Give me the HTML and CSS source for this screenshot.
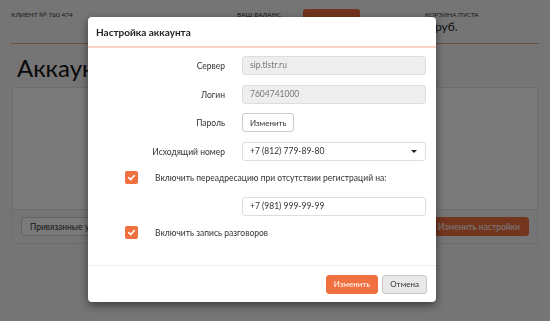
FILE: index.html
```html
<!DOCTYPE html>
<html lang="ru">
<head>
  <meta charset="UTF-8" />
  <title>Аккаунт</title>
  <link rel="stylesheet" href="styles.css">
</head>
<body>

  <div class="topbar">
    <div class="client">КЛИЕНТ № 760 474</div>
    <div class="balance">
      <span class="caption">ВАШ БАЛАНС</span>
      <span class="balance-box"></span>
    </div>
    <div class="cart">
      <span class="caption">КОРЗИНА ПУСТА</span>
      <span class="cart-sum">0 руб.</span>
    </div>
  </div>

  <h1 class="page-title">Аккаунт</h1>

  <div class="panel">
    <div class="panel-body"></div>
    <div class="panel-footer">
      <button class="btn">Привязанные устройства</button>
      <button class="btn btn-orange">Изменить настройки</button>
    </div>
  </div>

  <div class="overlay"></div>

  <div class="modal">
    <div class="modal-header">Настройка аккаунта</div>

    <div class="modal-body">
      <div class="row">
        <label class="label">Сервер</label>
        <div class="field disabled">sip.tlstr.ru</div>
      </div>
      <div class="row">
        <label class="label">Логин</label>
        <div class="field disabled">7604741000</div>
      </div>
      <div class="row">
        <label class="label">Пароль</label>
        <div class="cell"><button class="btn btn-small">Изменить</button></div>
      </div>
      <div class="row">
        <label class="label">Исходящий номер</label>
        <div class="field select">+7 (812) 779-89-80 <span class="caret"></span></div>
      </div>
      <div class="check-row">
        <span class="checkbox">
          <svg width="9" height="9" viewBox="0 0 10 10"><path d="M2 5.2 L4.2 7.3 L8.2 2.8" fill="none" stroke="#fff" stroke-width="1.8" stroke-linecap="round" stroke-linejoin="round"/></svg>
        </span>
        <span class="check-label">Включить переадресацию при отсутствии регистраций на:</span>
      </div>
      <div class="row">
        <span class="label"></span>
        <div class="field">+7 (981) 999-99-99</div>
      </div>
      <div class="check-row">
        <span class="checkbox">
          <svg width="9" height="9" viewBox="0 0 10 10"><path d="M2 5.2 L4.2 7.3 L8.2 2.8" fill="none" stroke="#fff" stroke-width="1.8" stroke-linecap="round" stroke-linejoin="round"/></svg>
        </span>
        <span class="check-label">Включить запись разговоров</span>
      </div>
    </div>

    <div class="modal-footer">
      <button class="btn btn-orange">Изменить</button>
      <button class="btn btn-gray">Отмена</button>
    </div>
  </div>

</body>
</html>
```

FILE: styles.css
```css
body {
  font-family: Lato, 'Open Sans', sans-serif;
  background: #f5f5f5;
  margin: 0;
  color: #222;
}

.topbar {
  display: flex;
  align-items: flex-start;
  margin: 0 11px;
  padding-top: 9px;
  height: 34px;
  border-bottom: 1px solid #f0a482;
}

.caption,
.client {
  font-size: 6.5px;
  text-transform: uppercase;
  color: #333;
  padding-top: 2px;
}

.client {
  width: 226px;
}

.balance {
  display: flex;
  width: 188px;
}

.balance .caption {
  width: 66px;
}

.balance-box {
  width: 57px;
  height: 22px;
  border-radius: 3px;
  background: #f07040;
}

.cart {
  display: flex;
  flex-direction: column;
}

.cart-sum {
  font-size: 12px;
  margin-top: 1px;
}

.page-title {
  font-weight: normal;
  font-size: 24px;
  margin: 9px 17px 5px;
  color: #111;
}

.panel {
  margin: 0 12px;
  border: 1px solid #e2e2e2;
  border-radius: 3px;
  background: #f5f5f5;
}

.panel-body {
  height: 121px;
  background: #fff;
  border-bottom: 1px solid #e6e6e6;
}

.panel-footer {
  display: flex;
  justify-content: space-between;
  padding: 7px 8px;
}

.btn {
  font-family: inherit;
  font-size: 8.5px;
  height: 19px;
  padding: 0 8px;
  border: 1px solid #ccc;
  border-radius: 3px;
  background: #fff;
  color: #333;
}

.btn-orange {
  background: #f07040;
  border-color: #f07040;
  color: #fff;
}

.btn-gray {
  background: #e8e8e8;
  border-color: #c8c8c8;
  color: #333;
}

.overlay {
  position: fixed;
  inset: 0;
  background: rgba(0, 0, 0, 0.52);
}

.modal {
  position: absolute;
  left: 88px;
  top: 17px;
  width: 348px;
  height: 285px;
  background: #fff;
  border-radius: 4px;
  box-shadow: 0 3px 8px rgba(0, 0, 0, 0.5);
  display: flex;
  flex-direction: column;
}

.modal-header {
  height: 29px;
  line-height: 30px;
  padding-left: 8px;
  font-size: 10px;
  font-weight: bold;
  color: #222;
  border-bottom: 2px solid #fcd2c0;
}

.modal-body {
  flex: 1;
  padding: 8px 10px 0 0;
  border-bottom: 1px solid #eee;
}

.row {
  display: grid;
  grid-template-columns: 137px 184px;
  column-gap: 17px;
  align-items: center;
  margin-bottom: 10px;
}

.row:nth-child(2) {
  margin-bottom: 9px;
}

.cell {
  display: flex;
}

.label {
  text-align: right;
  font-size: 8.5px;
  color: #333;
}

.field {
  height: 17px;
  line-height: 17px;
  border: 1px solid #ddd;
  border-radius: 3px;
  padding: 0 7px;
  font-size: 8.5px;
  color: #333;
  background: #fff;
}

.field.disabled {
  background: #eee;
  color: #777;
}

.select {
  display: flex;
  justify-content: space-between;
  align-items: center;
}

.caret {
  width: 0;
  height: 0;
  border-left: 3px solid transparent;
  border-right: 3px solid transparent;
  border-top: 3px solid #222;
  margin-right: 1px;
}

.btn-small {
  font-size: 8px;
  padding: 0 7px;
}

.check-row {
  display: flex;
  align-items: center;
  margin: 3px 0 13px 37px;
}

.row + .check-row {
  margin-top: 4px;
}

.checkbox {
  width: 13px;
  height: 13px;
  border-radius: 2px;
  background: #f07040;
  display: flex;
  align-items: center;
  justify-content: center;
  margin-right: 17px;
}

.check-label {
  font-size: 8.5px;
  color: #333;
}

.modal-footer {
  height: 36px;
  display: flex;
  justify-content: flex-end;
  align-items: center;
  gap: 4px;
  padding-right: 9px;
}

.modal-footer .btn {
  font-size: 8px;
  padding: 0 7px;
}
```
